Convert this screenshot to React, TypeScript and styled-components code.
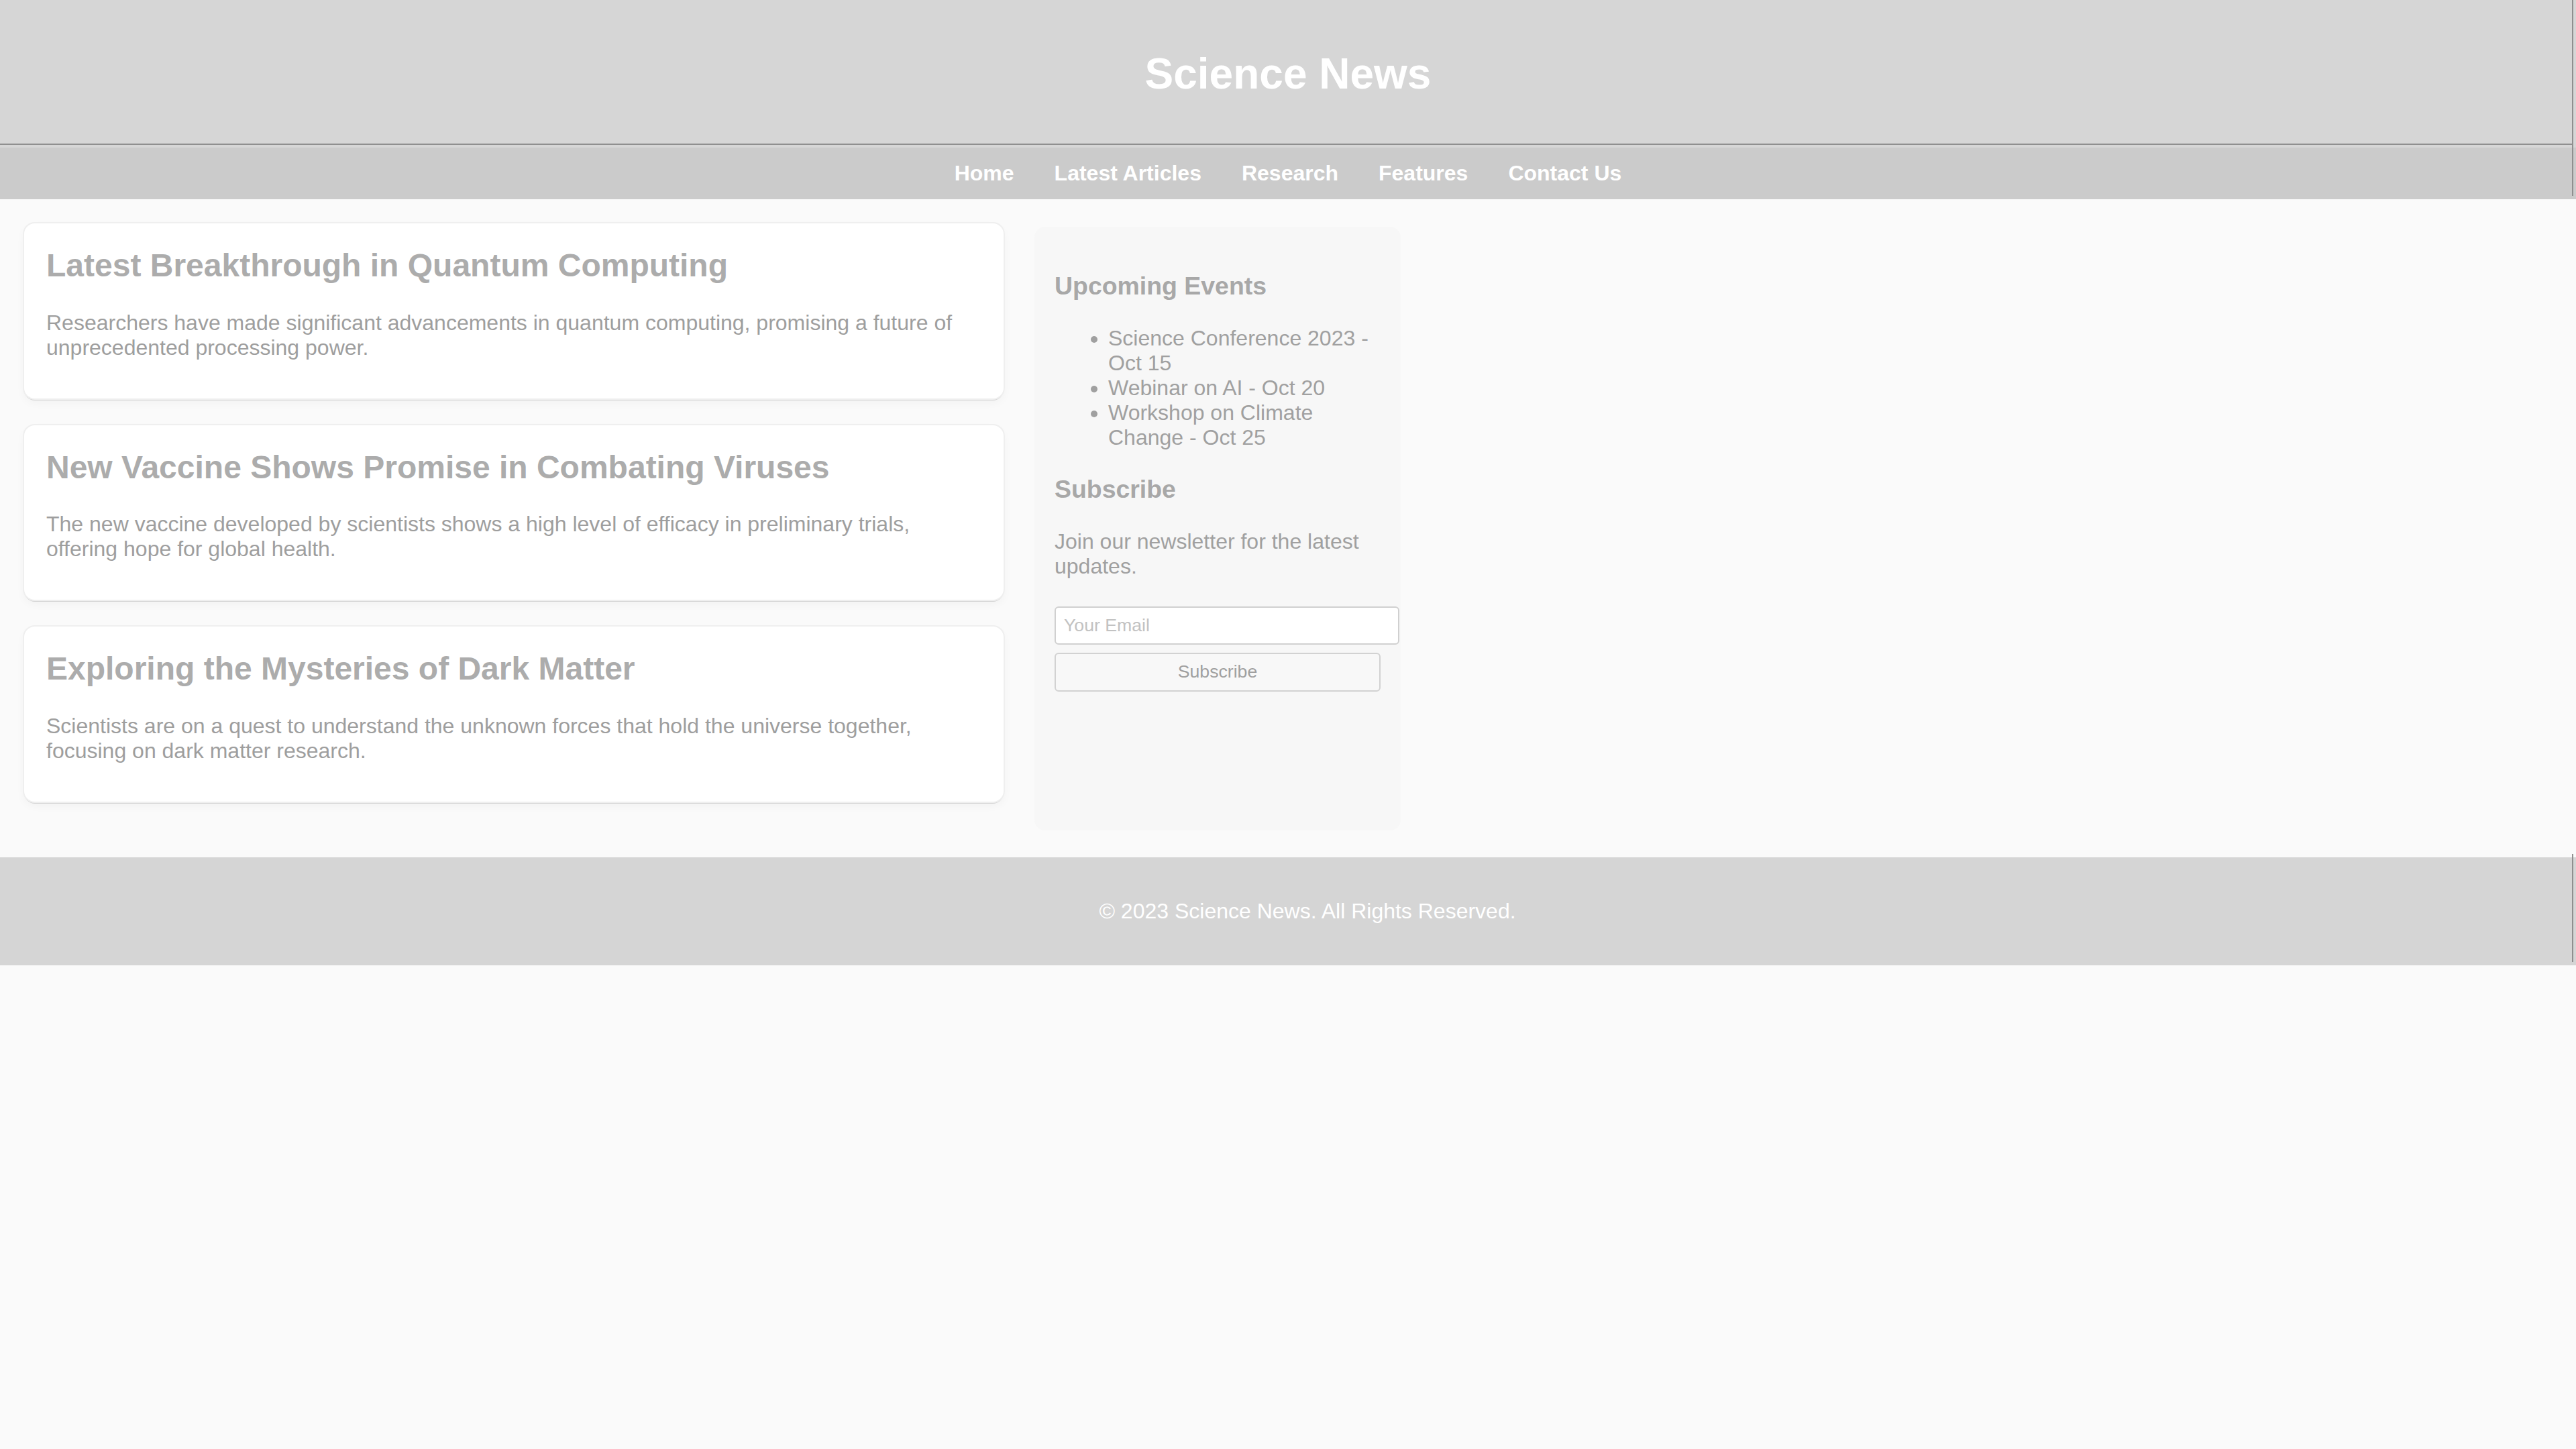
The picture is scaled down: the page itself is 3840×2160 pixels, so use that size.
import React from "react";
import styled, { createGlobalStyle } from "styled-components";

const GlobalStyle = createGlobalStyle`
  html, body {
    margin: 0;
    padding: 0;
    background: #fafafa;
  }
  body {
    font-family: "Liberation Sans", Arial, sans-serif;
    font-size: 32px;
    color: #9c9c9c;
  }
  * { box-sizing: border-box; }
`;

const Page = styled.div`
  position: relative;
  min-height: 2160px;
  background: #fafafa;
`;

const Top = styled.div`
  position: relative;
  &::after {
    content: "";
    position: absolute;
    top: 0;
    right: 4px;
    width: 2px;
    height: calc(100% - 5px);
    background: #8f8f8f;
  }
`;

const Header = styled.header`
  position: relative;
  background: #d6d6d6;
  padding: 30px 0;
  text-align: center;
  &::after {
    content: "";
    position: absolute;
    left: 0;
    right: 6px;
    bottom: 4px;
    height: 2px;
    background: #8f8f8f;
  }
`;

const Title = styled.h1`
  margin: 42.88px 0;
  font-size: 64px;
  font-weight: 700;
  line-height: normal;
  color: #ffffff;
`;

const Nav = styled.nav`
  background: #cbcbcb;
  padding: 20px 0;
  display: flex;
  justify-content: center;
  gap: 60px;
`;

const NavLink = styled.a`
  color: #ffffff;
  font-weight: 700;
  font-size: 32px;
  text-decoration: none;
  line-height: normal;
`;

const Container = styled.main`
  display: flex;
  align-items: flex-start;
  gap: 46px;
  padding: 36px 0 40px 36px;
`;

const Articles = styled.section`
  width: 1460px;
  flex: none;
`;

const Card = styled.article`
  background: #ffffff;
  border-radius: 16px;
  padding: 35px 30px 25px 33px;
  margin-bottom: 40px;
  box-shadow: 0 0 0 2px #efefef, 0 3px 0 0 #d4d4d4, 0 6px 14px rgba(0, 0, 0, 0.04);
`;

const CardTitle = styled.h2`
  margin: 0 0 39.84px;
  font-size: 48px;
  font-weight: 700;
  line-height: normal;
  color: #acacac;
`;

const CardText = styled.p`
  margin: 32px 0;
  font-size: 32px;
  line-height: normal;
  color: #9e9e9e;
`;

const Sidebar = styled.aside`
  width: 546px;
  flex: none;
  min-height: 900px;
  margin-top: 5px;
  padding: 30px;
  background: #f7f7f7;
  border-radius: 16px;
`;

const SideTitle = styled.h3`
  margin: 37.44px 0;
  font-size: 37.44px;
  font-weight: 700;
  line-height: normal;
  color: #a8a8a8;
`;

const EventList = styled.ul`
  margin: 32px 0;
  padding-left: 80px;
  line-height: normal;
  color: #a0a0a0;
`;

const SideText = styled.p`
  margin: 32px 0;
  line-height: normal;
  color: #a0a0a0;
`;

const Form = styled.form`
  margin: 0;
  padding-top: 9px;
`;

const EmailInput = styled.input`
  display: block;
  width: 514px;
  height: 57px;
  margin: 0;
  padding: 0 12px;
  border: 2px solid #d0d0d0;
  border-radius: 6px;
  background: #ffffff;
  font-family: "Liberation Sans", Arial, sans-serif;
  font-size: 26.67px;
  color: #999;
  outline: none;
  &::placeholder {
    color: #c2c2c2;
  }
`;

const SubscribeButton = styled.button`
  display: block;
  width: 486px;
  height: 58px;
  margin-top: 12px;
  border: 2px solid #d2d2d2;
  border-radius: 6px;
  background: #f8f8f8;
  font-family: "Liberation Sans", Arial, sans-serif;
  font-size: 26.67px;
  color: #a0a0a0;
`;

const Footer = styled.footer`
  position: relative;
  background: #d5d5d5;
  padding: 30px 0 30px 58px;
  text-align: center;
  &::after {
    content: "";
    position: absolute;
    top: -5px;
    right: 4px;
    width: 2px;
    height: 100%;
    background: #8f8f8f;
  }
`;

const FooterText = styled.p`
  margin: 32px 0;
  line-height: normal;
  color: #ffffff;
`;

const articles = [
  {
    title: "Latest Breakthrough in Quantum Computing",
    text: "Researchers have made significant advancements in quantum computing, promising a future of unprecedented processing power.",
  },
  {
    title: "New Vaccine Shows Promise in Combating Viruses",
    text: "The new vaccine developed by scientists shows a high level of efficacy in preliminary trials, offering hope for global health.",
  },
  {
    title: "Exploring the Mysteries of Dark Matter",
    text: "Scientists are on a quest to understand the unknown forces that hold the universe together, focusing on dark matter research.",
  },
];

const navItems = ["Home", "Latest Articles", "Research", "Features", "Contact Us"];

const events = [
  "Science Conference 2023 - Oct 15",
  "Webinar on AI - Oct 20",
  "Workshop on Climate Change - Oct 25",
];

export default function App() {
  return (
    <Page>
      <GlobalStyle />
      <Top>
        <Header>
          <Title>Science News</Title>
        </Header>
        <Nav>
          {navItems.map((n) => (
            <NavLink key={n} href="#">
              {n}
            </NavLink>
          ))}
        </Nav>
      </Top>
      <Container>
        <Articles>
          {articles.map((a) => (
            <Card key={a.title}>
              <CardTitle>{a.title}</CardTitle>
              <CardText>{a.text}</CardText>
            </Card>
          ))}
        </Articles>
        <Sidebar>
          <SideTitle>Upcoming Events</SideTitle>
          <EventList>
            {events.map((e) => (
              <li key={e}>{e}</li>
            ))}
          </EventList>
          <SideTitle>Subscribe</SideTitle>
          <SideText>Join our newsletter for the latest updates.</SideText>
          <Form onSubmit={(e) => e.preventDefault()}>
            <EmailInput type="email" placeholder="Your Email" />
            <SubscribeButton type="submit">Subscribe</SubscribeButton>
          </Form>
        </Sidebar>
      </Container>
      <Footer>
        <FooterText>© 2023 Science News. All Rights Reserved.</FooterText>
      </Footer>
    </Page>
  );
}
